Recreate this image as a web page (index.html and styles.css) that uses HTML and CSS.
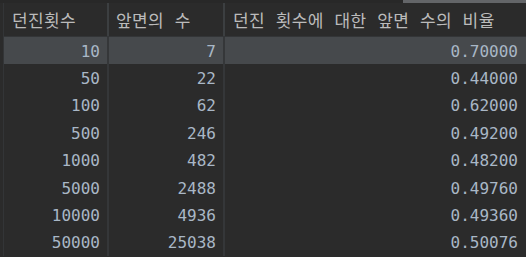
FILE: index.html
```html
<!DOCTYPE html>
<html lang="ko">
<head>
<meta charset="utf-8">
<link rel="stylesheet" href="styles.css">
</head>
<body>
<div class="scrolltrack"><div class="thumb"></div></div>
<div class="grid">
  <div class="row head">
    <div class="c c1">던진횟수</div>
    <div class="c c2">앞면의 수</div>
    <div class="c c3">던진 횟수에 대한 앞면 수의 비율</div>
  </div>
  <div class="row sel"><div class="c c1 n">10</div><div class="c c2 n">7</div><div class="c c3 n">0.70000</div></div>
  <div class="row"><div class="c c1 n">50</div><div class="c c2 n">22</div><div class="c c3 n">0.44000</div></div>
  <div class="row"><div class="c c1 n">100</div><div class="c c2 n">62</div><div class="c c3 n">0.62000</div></div>
  <div class="row"><div class="c c1 n">500</div><div class="c c2 n">246</div><div class="c c3 n">0.49200</div></div>
  <div class="row"><div class="c c1 n">1000</div><div class="c c2 n">482</div><div class="c c3 n">0.48200</div></div>
  <div class="row"><div class="c c1 n">5000</div><div class="c c2 n">2488</div><div class="c c3 n">0.49760</div></div>
  <div class="row"><div class="c c1 n">10000</div><div class="c c2 n">4936</div><div class="c c3 n">0.49360</div></div>
  <div class="row"><div class="c c1 n">50000</div><div class="c c2 n">25038</div><div class="c c3 n">0.50076</div></div>
</div>
</body>
</html>
```
FILE: styles.css
```css
html, body {
  margin: 0;
  padding: 0;
  background: #2b2b2b;
  overflow: hidden;
  height: 257px;
}
body {
  font-family: "DejaVu Sans Mono", "Noto Sans CJK KR", monospace;
  font-size: 16px;
  color: #a9b7c6;
}
.scrolltrack {
  height: 3px;
  display: flex;
  justify-content: flex-end;
  background: #282828;
}
.thumb {
  width: 123px;
  height: 3px;
  background: #636568;
}
.grid {
  margin-left: 3px;
  border-left: 1px solid #333537;
}
.row {
  display: grid;
  grid-template-columns: 105px 116px 1fr;
  height: 27.4px;
  align-items: center;
}
.row.head {
  height: 33px;
  border-bottom: 1px solid #333537;
  color: #bbbbbb;
  font-size: 17px;
  letter-spacing: 0.4px;
}
.row.sel {
  background: #46494c;
}
.c {
  height: 100%;
  display: flex;
  align-items: center;
  box-sizing: border-box;
  white-space: nowrap;
}
.c1, .c2 {
  border-right: 2px solid #353739;
}
.head .c1, .head .c2 {
  border-right-color: #3c3f41;
}
.head .c {
  padding-left: 8px;
}
.head .c2 {
  padding-left: 7px;
}
.n {
  justify-content: flex-end;
  padding-right: 7px;
  padding-top: 1px;
}
.c3.n {
  padding-right: 8px;
}
```
